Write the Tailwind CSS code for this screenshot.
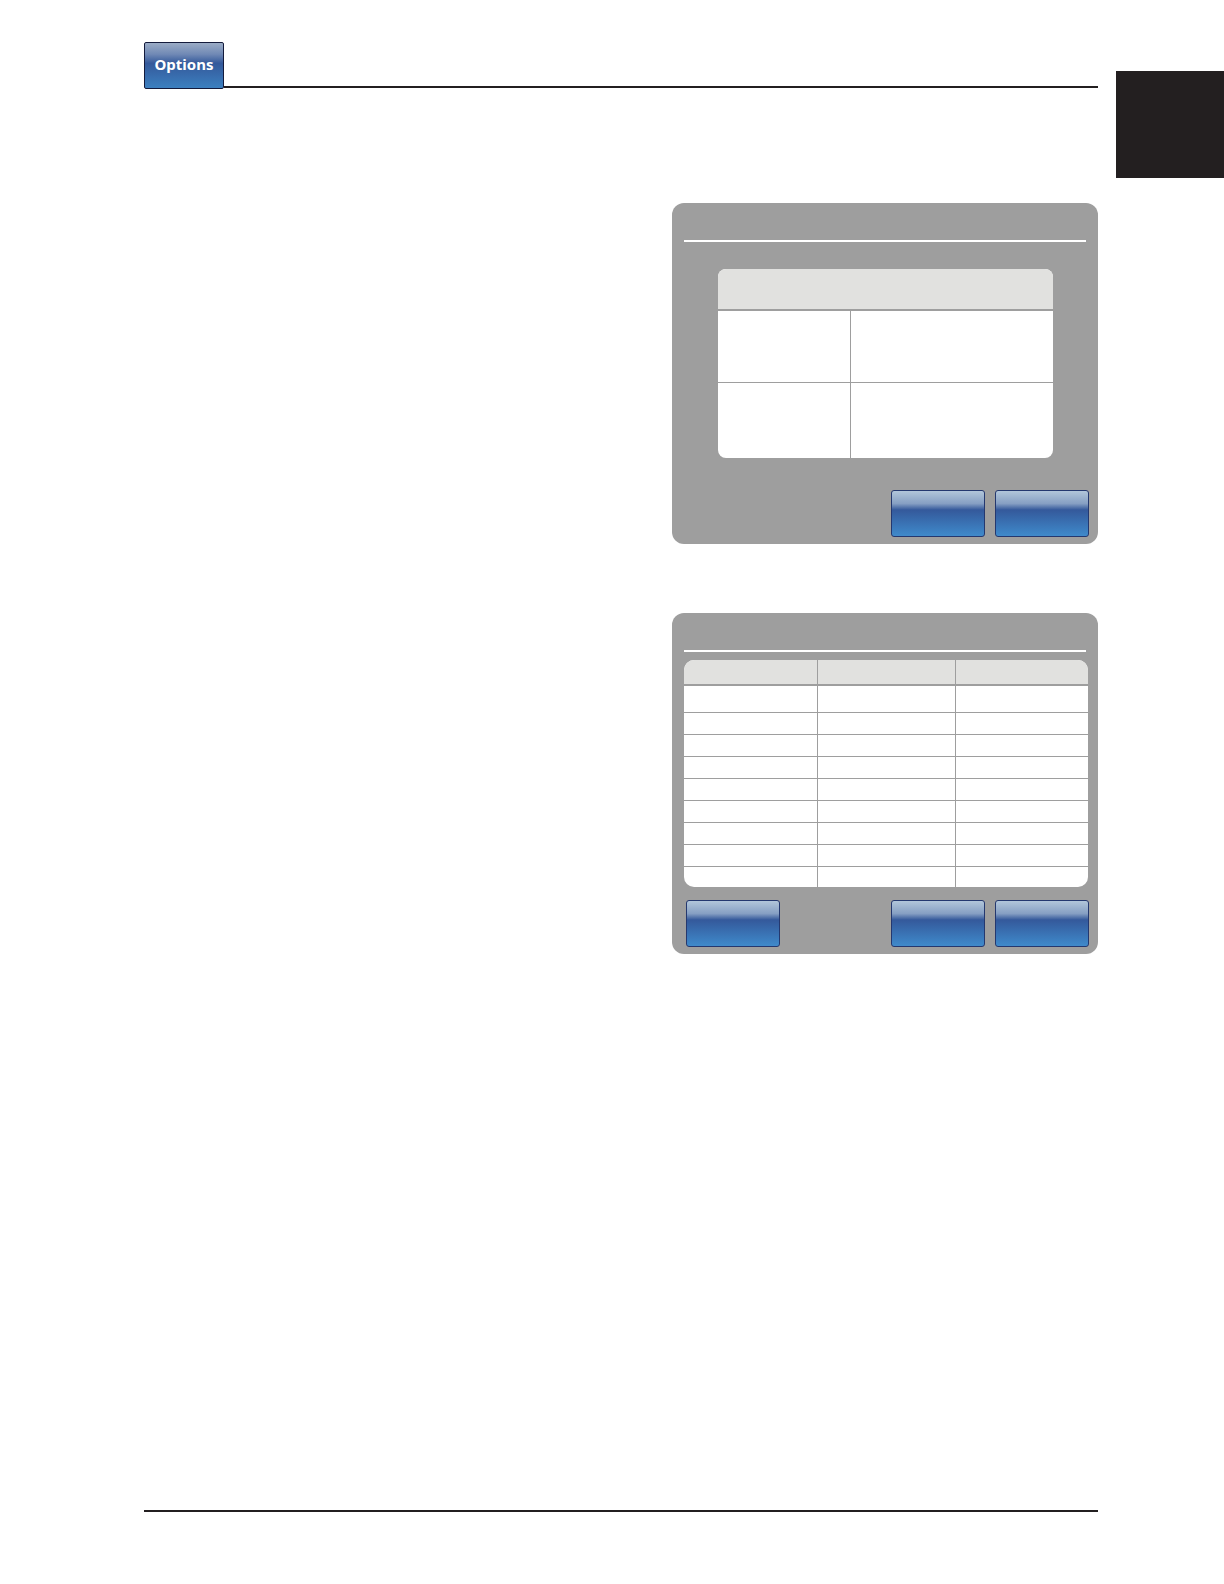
<!DOCTYPE html>
<html lang="en">
<head>
    <meta charset="UTF-8">
    <meta name="viewport" content="width=device-width, initial-scale=1.0">
    <title>Options</title>
    <script src="https://cdn.jsdelivr.net/npm/@tailwindcss/browser@4"></script>
</head>
<body class="bg-white min-h-screen flex flex-col font-['Noto_Sans',sans-serif]">
    <!-- Page header with section tab -->
    <header class="flex items-start gap-[18px] pl-36 pt-[42px]">
        <div class="flex flex-1 items-end">
            <button type="button" class="w-20 h-[47px] pb-1 rounded-xs border border-[#141b3c] bg-[linear-gradient(#9bacc6,#7089b5_25%,#34599b_45%,#3c80c0)] text-white text-[15px] leading-5 font-bold">Options</button>
            <div class="flex-1 h-0.5 mb-px bg-[#231f20]"></div>
        </div>
        <div class="w-27 h-[107px] mt-[29px] bg-[#231f20]"></div>
    </header>

    <main class="flex flex-col items-end gap-[69px] pr-[126px] pt-[25px]">
        <!-- Summary panel -->
        <section class="w-[426px] rounded-xl bg-[#9e9e9e] pt-[37px] pb-[7px]">
            <div class="h-0.5 mx-3 bg-white"></div>
            <div class="mt-[27px] ml-[46px] mr-[45px] rounded-lg overflow-hidden bg-white">
                <table class="w-full table-fixed border-separate border-spacing-0">
                    <colgroup>
                        <col class="w-[133px]">
                        <col>
                    </colgroup>
                    <thead>
                        <tr class="h-[42px]"><th colspan="2" class="p-0 bg-[#e1e1df] border-b-2 border-[#9e9e9e]"></th></tr>
                    </thead>
                    <tbody>
                        <tr class="h-[72px]">
                            <td class="p-0 border-b border-r border-[#9e9e9e]"></td>
                            <td class="p-0 border-b border-[#9e9e9e]"></td>
                        </tr>
                        <tr class="h-[75px]">
                            <td class="p-0 border-r border-[#9e9e9e]"></td>
                            <td class="p-0"></td>
                        </tr>
                    </tbody>
                </table>
            </div>
            <div class="flex justify-end gap-2.5 mt-8 pr-[9px]">
                <button type="button" aria-label="Back" class="w-[94px] h-[47px] rounded-[3px] border border-[#24386f] bg-[linear-gradient(#b2c6da,#869fc3_28%,#34599b_42%,#3f8acb)]"></button>
                <button type="button" aria-label="Next" class="w-[94px] h-[47px] rounded-[3px] border border-[#24386f] bg-[linear-gradient(#b2c6da,#869fc3_28%,#34599b_42%,#3f8acb)]"></button>
            </div>
        </section>

        <!-- List panel -->
        <section class="w-[426px] rounded-xl bg-[#9e9e9e] pt-[37px] pb-[7px]">
            <div class="h-0.5 mx-3 bg-white"></div>
            <div class="mt-2 ml-3 mr-2.5 rounded-[10px] overflow-hidden bg-white">
                <table class="w-full table-fixed border-separate border-spacing-0">
                    <colgroup>
                        <col class="w-[134px]">
                        <col class="w-[138px]">
                        <col>
                    </colgroup>
                    <thead>
                        <tr class="h-[26px] bg-[#e1e1df] *:p-0 *:border-b-2 *:border-r *:border-[#9e9e9e] *:last:border-r-0"><th></th><th></th><th></th></tr>
                    </thead>
                    <tbody>
                        <tr class="h-[27px] *:p-0 *:border-b *:border-r *:border-[#9e9e9e] *:last:border-r-0"><td></td><td></td><td></td></tr>
                        <tr class="h-[22px] *:p-0 *:border-b *:border-r *:border-[#9e9e9e] *:last:border-r-0"><td></td><td></td><td></td></tr>
                        <tr class="h-[22px] *:p-0 *:border-b *:border-r *:border-[#9e9e9e] *:last:border-r-0"><td></td><td></td><td></td></tr>
                        <tr class="h-[22px] *:p-0 *:border-b *:border-r *:border-[#9e9e9e] *:last:border-r-0"><td></td><td></td><td></td></tr>
                        <tr class="h-[22px] *:p-0 *:border-b *:border-r *:border-[#9e9e9e] *:last:border-r-0"><td></td><td></td><td></td></tr>
                        <tr class="h-[22px] *:p-0 *:border-b *:border-r *:border-[#9e9e9e] *:last:border-r-0"><td></td><td></td><td></td></tr>
                        <tr class="h-[22px] *:p-0 *:border-b *:border-r *:border-[#9e9e9e] *:last:border-r-0"><td></td><td></td><td></td></tr>
                        <tr class="h-[22px] *:p-0 *:border-b *:border-r *:border-[#9e9e9e] *:last:border-r-0"><td></td><td></td><td></td></tr>
                        <tr class="h-5 *:p-0 *:border-r *:border-[#9e9e9e] *:last:border-r-0"><td></td><td></td><td></td></tr>
                    </tbody>
                </table>
            </div>
            <div class="flex gap-2.5 mt-[13px] pl-3.5 pr-[9px]">
                <button type="button" aria-label="Options" class="w-[94px] h-[47px] mr-auto rounded-[3px] border border-[#24386f] bg-[linear-gradient(#b2c6da,#869fc3_28%,#34599b_42%,#3f8acb)]"></button>
                <button type="button" aria-label="Back" class="w-[94px] h-[47px] rounded-[3px] border border-[#24386f] bg-[linear-gradient(#b2c6da,#869fc3_28%,#34599b_42%,#3f8acb)]"></button>
                <button type="button" aria-label="Next" class="w-[94px] h-[47px] rounded-[3px] border border-[#24386f] bg-[linear-gradient(#b2c6da,#869fc3_28%,#34599b_42%,#3f8acb)]"></button>
            </div>
        </section>
    </main>

    <footer class="mt-auto mb-18 ml-36 mr-[126px] h-0.5 bg-[#231f20]"></footer>
</body>
</html>
